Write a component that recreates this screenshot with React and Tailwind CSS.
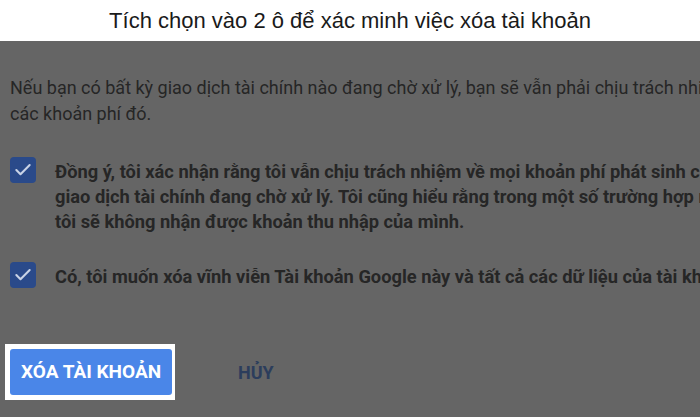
import React from 'react';
import { Check } from 'lucide-react';

const Box = () => (
  <div className="w-[26px] h-[26px] shrink-0 rounded-[4px] bg-[#2a4a8a] flex items-center justify-center">
    <Check className="w-[20px] h-[20px] text-[#c9d3e6]" strokeWidth={2.5} />
  </div>
);

export default function App() {
  return (
    <div className="w-[700px] h-[417px] overflow-hidden flex flex-col font-['Roboto','Noto_Sans',sans-serif]">
      <div className="h-[41px] bg-white flex items-center justify-center shrink-0">
        <h1 className="text-[22px] text-[#1a1a1a] font-['Liberation_Sans','Roboto',sans-serif]">
          Tích chọn vào 2 ô để xác minh việc xóa tài khoản
        </h1>
      </div>
      <div className="flex-1 bg-[#656565] pl-[10px] pt-[34px] text-[#262626] whitespace-nowrap overflow-hidden">
        <p className="text-[18px] leading-[26px]">
          Nếu bạn có bất kỳ giao dịch tài chính nào đang chờ xử lý, bạn sẽ vẫn phải chịu trách nhiệm về
          <br />
          các khoản phí đó.
        </p>
        <div className="flex gap-[19px] mt-[30px]">
          <Box />
          <p className="text-[18.3px] leading-[25px] font-bold mt-[2px]">
            Đồng ý, tôi xác nhận rằng tôi vẫn chịu trách nhiệm về mọi khoản phí phát sinh của các
            <br />
            giao dịch tài chính đang chờ xử lý. Tôi cũng hiểu rằng trong một số trường hợp nhất định,
            <br />
            tôi sẽ không nhận được khoản thu nhập của mình.
          </p>
        </div>
        <div className="flex gap-[19px] mt-[28px]">
          <Box />
          <p className="text-[18.3px] leading-[25px] font-bold mt-[2px]">
            Có, tôi muốn xóa vĩnh viễn Tài khoản Google này và tất cả các dữ liệu của tài khoản
          </p>
        </div>
        <div className="flex items-center mt-[55px] -ml-[5px]">
          <div className="bg-white p-[5px] pr-[3px]">
            <button className="w-[162px] h-[46px] bg-[#4a86e8] rounded-[3px] text-white font-bold text-[19px]">
              XÓA TÀI KHOẢN
            </button>
          </div>
          <button className="ml-[63px] text-[18px] font-bold text-[#2c3d5c]">HỦY</button>
        </div>
      </div>
    </div>
  );
}
